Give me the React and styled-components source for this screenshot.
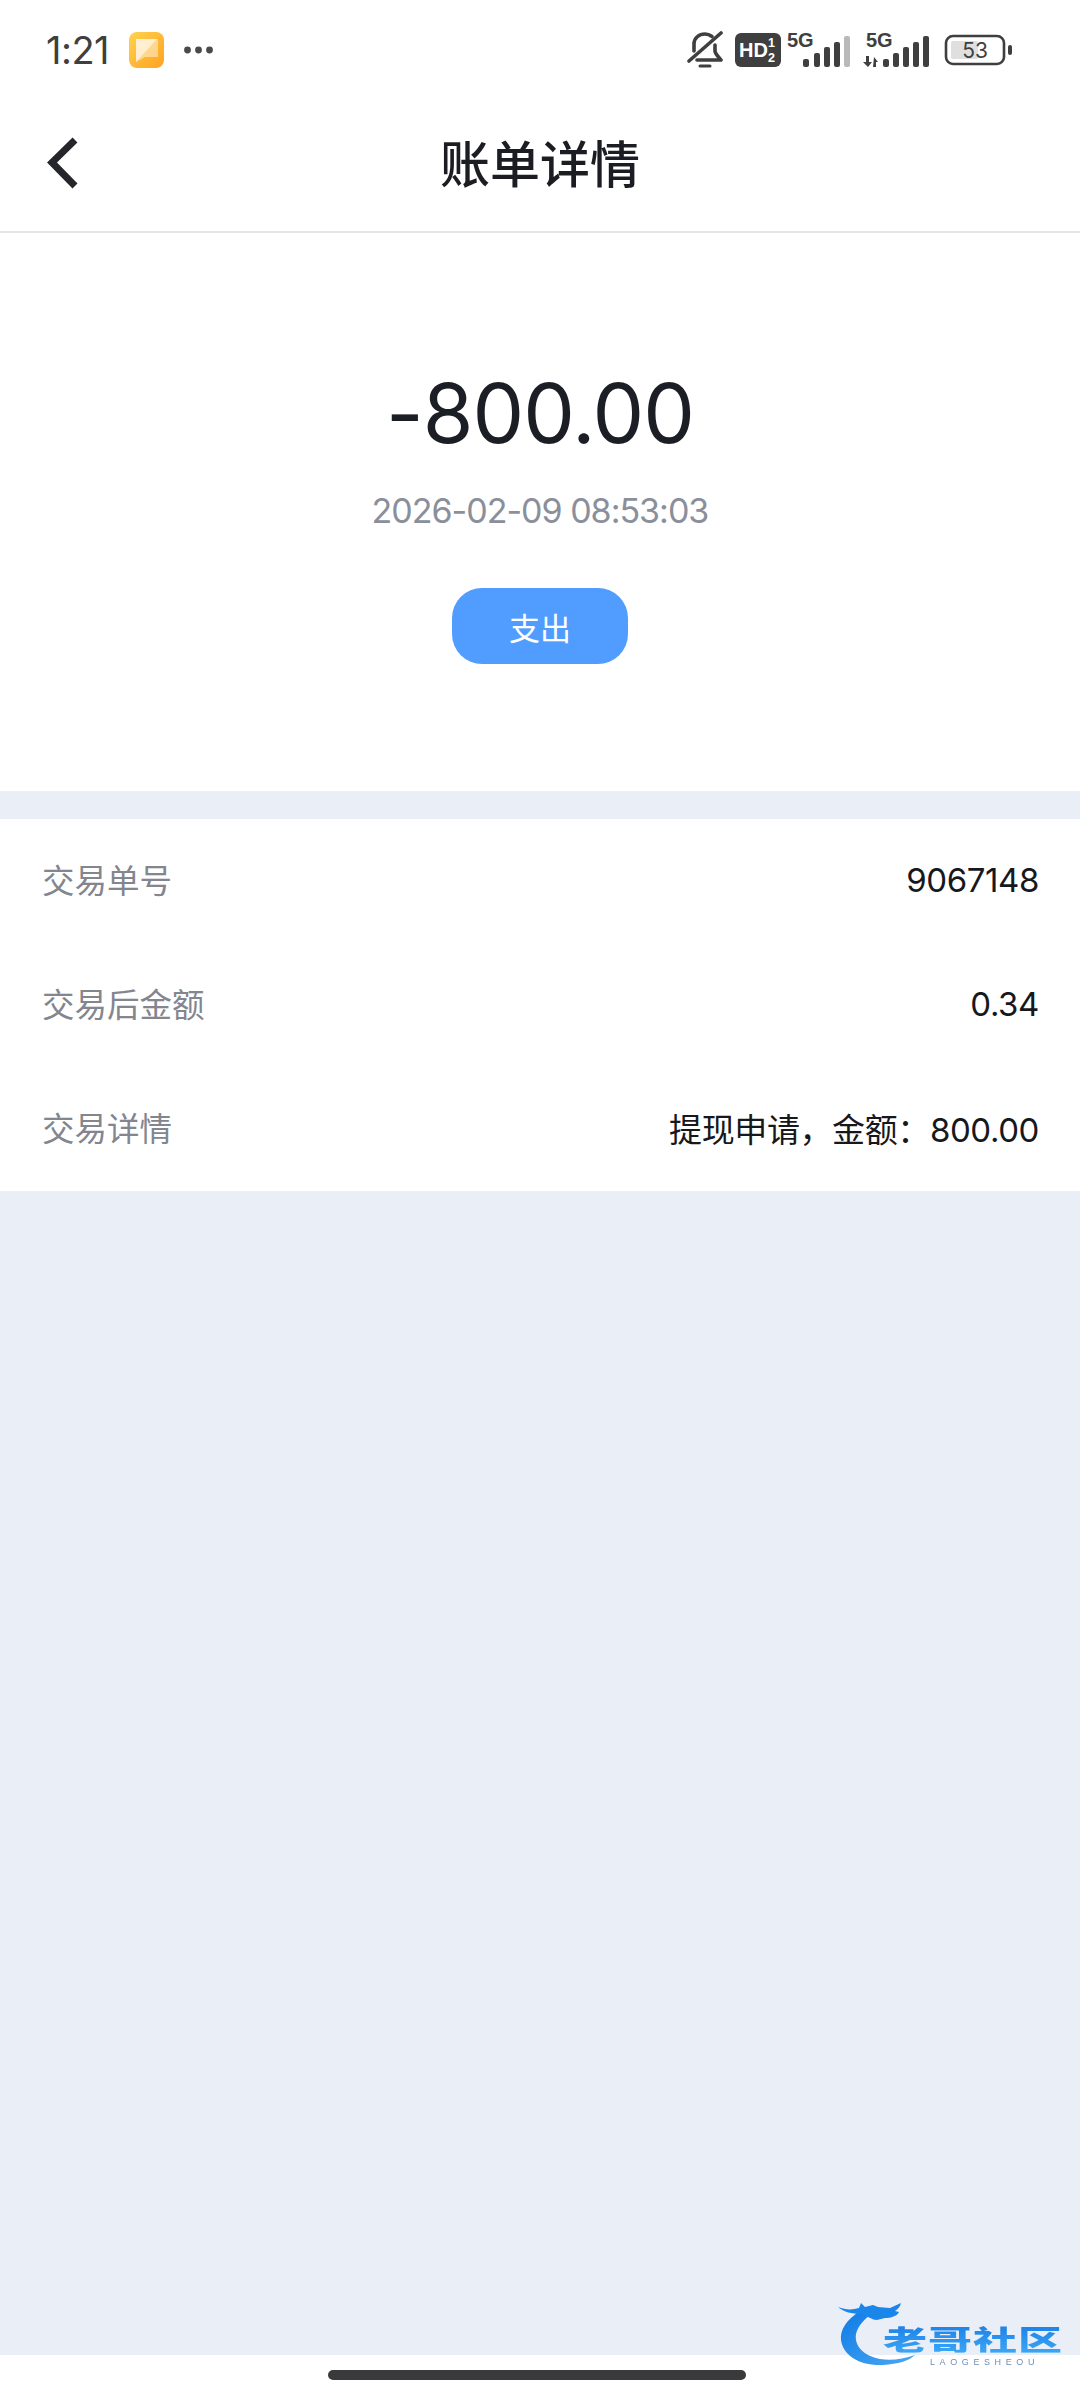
import React from "react";
import styled, { createGlobalStyle } from "styled-components";

const Global = createGlobalStyle`
  html, body { margin: 0; padding: 0; background: #fff; }
  * { box-sizing: border-box; }
  body { font-family: Inter, "Noto Sans CJK SC", sans-serif; }
`;

const Page = styled.div`
  position: relative;
  width: 1080px;
  height: 2400px;
  display: flex;
  flex-direction: column;
  background: #e9eef7;
  overflow: hidden;
`;

const StatusBar = styled.div`
  height: 100px;
  padding: 0 66px 0 46px;
  background: #fff;
  display: flex;
  align-items: center;
  color: #3f3f3f;
`;

const Clock = styled.span`
  font-family: Inter, sans-serif;
  font-size: 38px;
  font-weight: 400;
  letter-spacing: -0.5px;
  color: #3f3f3f;
  margin-right: 20px;
`;

const StatusGroup = styled.div`
  display: flex;
  align-items: center;
  margin-left: auto;
`;

const Header = styled.header`
  position: relative;
  height: 133px;
  background: #fff;
  border-bottom: 2px solid #e4e4e6;
  display: flex;
  align-items: center;
  justify-content: center;
  flex: none;
`;

const BackIcon = styled.svg`
  position: absolute;
  left: 46px;
  top: 36px;
`;

const Title = styled.h1`
  margin: 0 0 10px;
  font-family: "Noto Sans CJK SC", sans-serif;
  font-size: 50px;
  font-weight: 500;
  color: #1c1d22;
  line-height: 1;
`;

const Hero = styled.section`
  height: 558px;
  background: #fff;
  display: flex;
  flex-direction: column;
  align-items: center;
  padding-top: 126px;
  flex: none;
`;

const Amount = styled.div`
  font-family: Inter, sans-serif;
  font-size: 82px;
  line-height: 110px;
  font-weight: 400;
  letter-spacing: -1px;
  color: #1b1e25;
`;

const DateText = styled.div`
  margin-top: 20px;
  font-family: Inter, sans-serif;
  font-size: 34px;
  line-height: 44px;
  letter-spacing: -1px;
  color: #8a8f9b;
`;

const Tag = styled.div`
  margin-top: 55px;
  width: 176px;
  height: 76px;
  border-radius: 30px;
  background: #519dff;
  color: #fff;
  font-family: "Noto Sans CJK SC", sans-serif;
  font-size: 31px;
  display: flex;
  align-items: center;
  justify-content: center;
`;

const List = styled.section`
  margin-top: 28px;
  background: #fff;
  flex: none;
`;

const Row = styled.div`
  height: 124px;
  padding: 0 41px 0 42px;
  display: flex;
  align-items: center;
  justify-content: space-between;
`;

const Label = styled.span`
  padding-bottom: 6px;
  font-family: "Noto Sans CJK SC", sans-serif;
  font-size: 32.5px;
  color: #83858f;
`;

const Value = styled.span`
  padding-bottom: 2px;
  font-family: Inter, "Noto Sans CJK SC", sans-serif;
  font-size: 33px;
  letter-spacing: -0.4px;
  color: #17181c;
`;

const Footer = styled.div`
  margin-top: auto;
  height: 45px;
  background: #fff;
  display: flex;
  justify-content: center;
  padding-top: 15px;
  flex: none;
`;

const HomeBar = styled.div`
  width: 418px;
  height: 10px;
  margin-right: 6px;
  border-radius: 5px;
  background: #3a3a3c;
`;

const Watermark = styled.div`
  position: absolute;
  left: 836px;
  top: 2300px;
  width: 230px;
  height: 80px;
  filter: blur(0.7px);
`;

const MarkTitle = styled.div`
  position: absolute;
  left: 47px;
  top: 24px;
  font-family: "Noto Sans CJK SC", sans-serif;
  font-size: 44px;
  font-weight: 900;
  line-height: 44px;
  letter-spacing: 1px;
  white-space: nowrap;
  transform: scaleY(0.65);
  transform-origin: top left;
  background: linear-gradient(#1c7fe6, #3ba6f5);
  -webkit-background-clip: text;
  background-clip: text;
  color: transparent;
`;

const MarkSub = styled.div`
  position: absolute;
  left: 94px;
  top: 57px;
  font-family: "Liberation Sans", sans-serif;
  font-size: 9px;
  line-height: 10px;
  letter-spacing: 4.6px;
  color: #6f8fb8;
  white-space: nowrap;
`;

const AppBadge = () => (
  <svg width="36" height="38" viewBox="0 0 36 38" style={{ marginRight: 18 }}>
    <defs>
      <linearGradient id="badge" x1="0" y1="0" x2="1" y2="1">
        <stop offset="0" stopColor="#ffd24f" />
        <stop offset="1" stopColor="#ffa21f" />
      </linearGradient>
    </defs>
    <rect x="0" y="1" width="35" height="36" rx="8" fill="url(#badge)" />
    <path d="M7 8h22v18H16L7 31z" fill="#fff" opacity=".45" />
    <path d="M7 8h21L7 31z" fill="#fff" opacity=".55" />
  </svg>
);

const Dots = () => (
  <svg width="32" height="10" viewBox="0 0 32 10">
    <circle cx="4.5" cy="5" r="3.4" fill="#4a4a4a" />
    <circle cx="15.5" cy="5" r="3.4" fill="#4a4a4a" />
    <circle cx="26.5" cy="5" r="3.4" fill="#4a4a4a" />
  </svg>
);

const BellOff = () => (
  <svg width="36" height="38" viewBox="0 0 36 38" fill="none" stroke="#3f3f3f" strokeWidth="3.6" strokeLinecap="round" strokeLinejoin="round" style={{ marginRight: 12 }}>
    <path d="M7 20v-7C7 7 12 3 18 3c3 0 5 1 7 2.5" />
    <path d="M28 14v6c0 3 3 5 6 9H10" />
    <path d="M34 2L2 30" />
    <path d="M13 35h10" strokeWidth="3" />
  </svg>
);

const HdBadge = () => (
  <svg width="46" height="36" viewBox="0 0 46 36" style={{ marginRight: 6 }}>
    <rect width="46" height="34" y="1" rx="6" fill="#3f3f3f" />
    <text x="4" y="25" fontFamily="'Liberation Sans', sans-serif" fontWeight="700" fontSize="20" fill="#fff">HD</text>
    <text x="33" y="15" fontFamily="'Liberation Sans', sans-serif" fontWeight="700" fontSize="12.5" fill="#fff">1</text>
    <text x="33" y="30" fontFamily="'Liberation Sans', sans-serif" fontWeight="700" fontSize="12.5" fill="#fff">2</text>
  </svg>
);

const SignalFirst = () => (
  <svg width="64" height="44" viewBox="0 0 64 44" style={{ marginRight: 12 }}>
    <text x="0" y="19" fontFamily="'Liberation Sans', sans-serif" fontWeight="700" fontSize="20" fill="#3f3f3f">5G</text>
    <rect x="16" y="31" width="6" height="8" rx="2" fill="#3f3f3f" />
    <rect x="27" y="25" width="6" height="14" rx="2" fill="#3f3f3f" />
    <rect x="37" y="19" width="6" height="20" rx="2" fill="#3f3f3f" />
    <rect x="47" y="14" width="6" height="25" rx="2" fill="#3f3f3f" />
    <rect x="57" y="8" width="6" height="31" rx="2" fill="#b9b9b9" />
  </svg>
);

const SignalSecond = () => (
  <svg width="66" height="44" viewBox="0 0 66 44" style={{ marginRight: 15 }}>
    <text x="3" y="19" fontFamily="'Liberation Sans', sans-serif" fontWeight="700" fontSize="20" fill="#3f3f3f">5G</text>
    <path d="M3 28h3v6h3l-4 5-5-5h3zM11 29l4 5h-2v5h-3z" fill="#3f3f3f" />
    <rect x="20" y="31" width="6" height="8" rx="2" fill="#3f3f3f" />
    <rect x="30" y="25" width="6" height="14" rx="2" fill="#3f3f3f" />
    <rect x="40" y="19" width="6" height="20" rx="2" fill="#3f3f3f" />
    <rect x="50" y="14" width="6" height="25" rx="2" fill="#3f3f3f" />
    <rect x="60" y="8" width="6" height="31" rx="2" fill="#3f3f3f" />
  </svg>
);

const Battery = () => (
  <svg width="70" height="32" viewBox="0 0 70 32">
    <rect x="2" y="2" width="58" height="28" rx="7" fill="none" stroke="#3f3f3f" strokeWidth="2.6" />
    <rect x="7" y="7" width="27" height="18" rx="2" fill="#dfdfdf" />
    <text x="31" y="24" textAnchor="middle" fontFamily="Inter, sans-serif" fontSize="21" fill="#3f3f3f">53</text>
    <rect x="64" y="11" width="4" height="10" rx="2" fill="#3f3f3f" />
  </svg>
);

const Dragon = () => (
  <svg width="110" height="80" viewBox="0 0 110 80" style={{ position: "absolute", left: 0, top: 0 }}>
    <defs>
      <linearGradient id="dragon" x1="0" y1="0" x2="1" y2="1">
        <stop offset="0" stopColor="#0f7ae5" />
        <stop offset="1" stopColor="#4aa9f3" />
      </linearGradient>
    </defs>
    <path d="M24 11C10 20 4 30 5 40c2 15 18 26 42 25 15-1 26-4 32-10-12 4-24 6-35 4C28 56 18 46 20 34c2-8 8-15 16-20z" fill="url(#dragon)" />
    <path d="M2 7c8 3 14 3 21 1l2-5 4 4 8-2 5 2 12 1 11-5c-1 4-3 6-6 8l4 1c-2 4-8 6-14 6l-8 2c-6 0-10-5-16-6C16 14 8 12 2 7z" fill="#1b86ea" />
  </svg>
);

const rows = [
  ["交易单号", "9067148"],
  ["交易后金额", "0.34"],
  ["交易详情", "提现申请，金额：800.00"],
];

export default function App() {
  return (
    <Page>
      <Global />
      <StatusBar>
        <Clock>1:21</Clock>
        <AppBadge />
        <Dots />
        <StatusGroup>
          <BellOff />
          <HdBadge />
          <SignalFirst />
          <SignalSecond />
          <Battery />
        </StatusGroup>
      </StatusBar>
      <Header>
        <BackIcon width="34" height="54" viewBox="0 0 34 54" fill="none" stroke="#25262b" strokeWidth="7">
          <path d="M29 4L6 26.5 29 50" />
        </BackIcon>
        <Title>账单详情</Title>
      </Header>
      <Hero>
        <Amount>-800.00</Amount>
        <DateText>2026-02-09 08:53:03</DateText>
        <Tag>支出</Tag>
      </Hero>
      <List>
        {rows.map(([label, value]) => (
          <Row key={label}>
            <Label>{label}</Label>
            <Value>{value}</Value>
          </Row>
        ))}
      </List>
      <Footer>
        <HomeBar />
      </Footer>
      <Watermark>
        <Dragon />
        <MarkTitle>老哥社区</MarkTitle>
        <MarkSub>LAOGESHEOU</MarkSub>
      </Watermark>
    </Page>
  );
}
